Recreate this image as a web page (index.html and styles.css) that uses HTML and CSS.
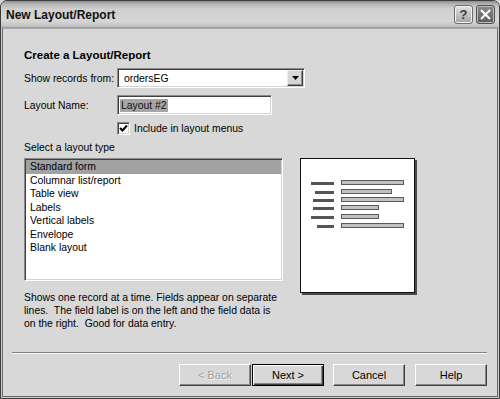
FILE: index.html
```html
<!DOCTYPE html>
<html>
<head>
<meta charset="utf-8">
<link rel="stylesheet" href="styles.css">
</head>
<body>
<div class="window">
  <div class="titlebar">
    <span class="title">New Layout/Report</span>
    <div class="tb-buttons">
      <span class="tb-btn tb-help">?</span>
      <span class="tb-btn tb-close"><svg width="11" height="11" viewBox="0 0 11 11"><path d="M1 1L10 10M10 1L1 10" stroke="#fff" stroke-width="2" fill="none"/></svg></span>
    </div>
  </div>
  <div class="client">
    <div class="content">
      <h1 class="heading">Create a Layout/Report</h1>
      <div class="field-row">
        <span class="lbl">Show records from:</span>
        <div class="select">
          <span class="select-text">ordersEG</span>
          <span class="select-btn"><svg width="7" height="4" viewBox="0 0 7 4"><path d="M0 0H7L3.5 4Z" fill="#000"/></svg></span>
        </div>
      </div>
      <div class="field-row row2">
        <span class="lbl">Layout Name:</span>
        <div class="textbox"><span class="sel-text">Layout #2</span></div>
      </div>
      <div class="check-row">
        <span class="checkbox"><svg width="9" height="9" viewBox="0 0 9 9"><path d="M1 4L3.5 6.5L8 1.5" stroke="#000" stroke-width="2" fill="none"/></svg></span>
        <span>Include in layout menus</span>
      </div>
      <div class="section-label">Select a layout type</div>
      <div class="middle">
        <div class="left-col">
          <ul class="listbox">
            <li class="selected">Standard form</li>
            <li>Columnar list/report</li>
            <li>Table view</li>
            <li>Labels</li>
            <li>Vertical labels</li>
            <li>Envelope</li>
            <li>Blank layout</li>
          </ul>
          <p class="desc">Shows one record at a time. Fields appear on separate<br>lines.&nbsp; The field label is on the left and the field data is<br>on the right.&nbsp; Good for data entry.</p>
        </div>
        <div class="preview">
          <svg width="113" height="133" viewBox="0 0 113 133">
            <g fill="#555">
              <rect x="10" y="23" width="23" height="3"/>
              <rect x="14" y="32" width="19" height="3"/>
              <rect x="12" y="40" width="21" height="3"/>
              <rect x="12" y="48" width="21" height="3"/>
              <rect x="10" y="57" width="23" height="3"/>
              <rect x="16" y="66" width="17" height="3"/>
            </g>
            <g fill="#c2c2c2" stroke="#5a5a5a" stroke-width="1">
              <rect x="40.5" y="21.5" width="62" height="4"/>
              <rect x="40.5" y="30.5" width="50" height="4"/>
              <rect x="40.5" y="38.5" width="62" height="4"/>
              <rect x="40.5" y="46.5" width="37" height="4"/>
              <rect x="40.5" y="55.5" width="37" height="4"/>
              <rect x="40.5" y="64.5" width="62" height="4"/>
            </g>
          </svg>
        </div>
      </div>
    </div>
    <div class="separator"></div>
    <div class="buttons">
      <button class="btn btn-disabled btn-back">&lt; Back</button>
      <button class="btn btn-default btn-next">Next &gt;</button>
      <button class="btn btn-cancel">Cancel</button>
      <button class="btn">Help</button>
    </div>
  </div>
</div>
</body>
</html>
```

FILE: styles.css
```css
html, body {
  margin: 0;
  padding: 0;
}
body {
  width: 500px;
  height: 399px;
  overflow: hidden;
  background: #d6d6d6;
  font-family: "Liberation Sans", Arial, sans-serif;
  font-size: 10.4px;
  color: #000;
}
.window {
  box-sizing: border-box;
  width: 500px;
  height: 399px;
  border: 1px solid #3c3c3c;
  border-radius: 7px 7px 0 0;
  background: #cdcdcd;
  display: flex;
  flex-direction: column;
  overflow: hidden;
}
.titlebar {
  height: 27px;
  flex: none;
  display: flex;
  align-items: center;
  justify-content: space-between;
  padding: 0 4px 0 5px;
  background: linear-gradient(#8c8c8c 0px, #b4b4b4 3px, #d0d0d0 8px, #d6d6d6 20px, #c4c4c4 25px, #9c9c9c 27px);
}
.title {
  font-weight: bold;
  font-size: 12px;
  color: #111;
}
.tb-buttons {
  display: flex;
  gap: 3px;
}
.tb-btn {
  width: 19px;
  height: 19px;
  box-sizing: border-box;
  border-radius: 3px;
  display: flex;
  align-items: center;
  justify-content: center;
}
.tb-help {
  background: linear-gradient(#e2e2e2, #a4a4a4);
  border: 1px solid #6c6c6c;
  box-shadow: inset 0 0 0 1px #f2f2f2;
  font-weight: bold;
  font-size: 13px;
  color: #3a3a3a;
}
.tb-close {
  background: linear-gradient(#8c8c8c, #5c5c5c);
  border: 1px solid #505050;
  box-shadow: inset 0 0 0 1px #bcbcbc;
}
.client {
  flex: 1;
  margin: 0 1px 1px;
  border: 1px solid #686868;
  border-top-color: #a4a4a4;
  background: #d8d8d8;
  display: flex;
  flex-direction: column;
}
.content {
  padding: 19px 0 0 21px;
}
.heading {
  margin: 0;
  font-size: 11.5px;
  font-weight: bold;
  line-height: 14px;
}
.field-row {
  display: flex;
  align-items: center;
  height: 20px;
  margin-top: 6px;
}
.row2 {
  margin-top: 7px;
}
.lbl {
  width: 93px;
  flex: none;
}
.select,
.textbox,
.listbox,
.checkbox {
  box-sizing: border-box;
  background: #fff;
  border: 1px solid;
  border-color: #8a8a8a #fff #fff #8a8a8a;
  box-shadow: inset 1px 1px 0 #404040, inset -1px -1px 0 #d4d4d4;
}
.select {
  width: 188px;
  height: 20px;
  padding: 1px;
  display: flex;
  align-items: center;
}
.select-text {
  flex: 1;
  padding-left: 5px;
}
.select-btn {
  width: 16px;
  height: 16px;
  box-sizing: border-box;
  background: #d6d6d6;
  border: 1px solid;
  border-color: #eee #404040 #404040 #eee;
  box-shadow: inset -1px -1px 0 #888;
  display: flex;
  align-items: center;
  justify-content: center;
}
.textbox {
  width: 155px;
  height: 20px;
  padding: 1px 1px 1px 2px;
  display: flex;
  align-items: center;
}
.sel-text {
  background: #a6a6a6;
  color: #111;
  line-height: 13px;
  padding: 0 1px;
}
.check-row {
  display: flex;
  align-items: center;
  gap: 4px;
  height: 13px;
  margin: 7px 0 0 93px;
}
.checkbox {
  width: 13px;
  height: 13px;
  display: flex;
  align-items: center;
  justify-content: center;
}
.section-label {
  margin-top: 6px;
  line-height: 14px;
}
.middle {
  display: flex;
  align-items: flex-start;
  gap: 17px;
  margin-top: 3px;
}
.listbox {
  width: 259px;
  height: 123px;
  margin: 0;
  padding: 1px;
  list-style: none;
}
.listbox li {
  line-height: 13.5px;
  padding-left: 4px;
  white-space: nowrap;
}
.listbox li.selected {
  background: #a2a2a2;
}
.desc {
  margin: 10px 0 0;
  line-height: 13px;
  white-space: nowrap;
}
.preview {
  flex: none;
  width: 115px;
  height: 135px;
  box-sizing: border-box;
  background: #fff;
  border: 1px solid #111;
  box-shadow: 2px 2px 0 #4a4a4a;
}
.preview svg {
  display: block;
}
.separator {
  margin: auto 10px 0 9px;
  border-top: 1px solid #808080;
  border-bottom: 1px solid #fff;
}
.buttons {
  display: flex;
  justify-content: flex-end;
  margin-top: 10px;
  padding: 0 10px 10px 0;
}
.btn {
  width: 72px;
  height: 22px;
  box-sizing: border-box;
  padding: 0;
  font-family: inherit;
  font-size: 11px;
  color: #000;
  background: #d8d8d8;
  border: 1px solid;
  border-color: #fff #404040 #404040 #fff;
  box-shadow: inset -1px -1px 0 #888;
}
.btn-default {
  border: 1px solid #000;
  box-shadow: inset 1px 1px 0 #fff, inset -1px -1px 0 #404040, inset -2px -2px 0 #888;
}
.btn-disabled {
  color: #a0a0a0;
  text-shadow: 1px 1px 0 #f4f4f4;
}
.btn-back {
  margin-right: 1px;
}
.btn-next {
  margin-right: 9px;
}
.btn-cancel {
  margin-right: 10px;
}
```
